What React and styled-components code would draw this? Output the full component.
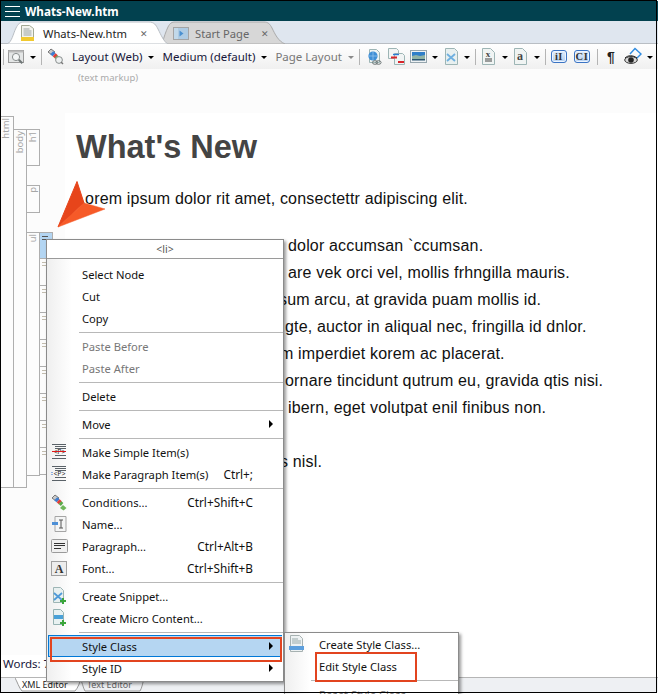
import React from 'react';
import styled, { createGlobalStyle } from 'styled-components';

const Global = createGlobalStyle`
  html, body { margin: 0; padding: 0; background: #fff; }
  * { box-sizing: border-box; }
`;

const UI = `"Noto Sans", "Open Sans", sans-serif`;

const Frame = styled.div`
  position: relative;
  width: 658px;
  height: 694px;
  overflow: hidden;
  background: #fff;
  display: flex;
  flex-direction: column;
  font-family: ${UI};
  font-size: 11.2px;
  color: #111;
`;
const FrameEdge = styled.div`
  position: absolute;
  left: 0;
  top: 0;
  width: 657px;
  height: 693px;
  border: 1px solid #000;
  pointer-events: none;
  z-index: 20;
`;
const TitleBar = styled.header`
  height: 20px;
  margin-top: 1px;
  background: #02414f;
  display: flex;
  align-items: center;
  padding-left: 5px;
  gap: 5px;
  flex: none;
`;
const Hamburger = styled.div`
  width: 15px;
  height: 11px;
  border-top: 1px solid #fff;
  border-bottom: 1px solid #fff;
  position: relative;
  &::after { content: ''; position: absolute; left: 0; right: 0; top: 4px; height: 1px; background: #fff; }
`;
const Title = styled.span`
  font-weight: 700;
  font-size: 11.7px;
  color: #fff;
`;
const TabStrip = styled.div`
  height: 23px;
  flex: none;
  background: #dfe6ef;
  border-bottom: 1px solid #b9bec4;
  display: flex;
  padding-left: 7px;
`;
const Tab = styled.div`
  position: relative;
  width: ${p => p.$w}px;
  margin-left: ${p => p.$ml || 0}px;
  height: 23px;
  z-index: ${p => (p.$active ? 2 : 1)};
  flex: none;
  display: flex;
  align-items: center;
  padding-top: 1px;
  font-size: 11.2px;
  color: ${p => (p.$active ? '#222' : '#666')};
`;
const TabShape = styled.svg`
  position: absolute;
  left: 0;
  top: 0;
  z-index: -1;
`;
const TabIcon = styled.svg`
  margin-left: ${p => p.$ml}px;
  flex: none;
`;
const TabLabel = styled.span`
  margin-left: ${p => p.$ml}px;
  white-space: nowrap;
`;
const TabClose = styled.span`
  margin-left: ${p => p.$ml}px;
  font-size: 9px;
  color: #666;
`;
const Toolbar = styled.div`
  height: 25px;
  flex: none;
  background: linear-gradient(#ffffff, #f0f0f0);
  display: flex;
  align-items: center;
  padding-left: 3px;
`;
const Sep = styled.i`
  width: 1px;
  height: 16px;
  background: #b4b4b4;
  flex: none;
  margin: 0 ${p => p.$r ?? 0}px 0 ${p => p.$l ?? 5}px;
`;
const Caret = styled.i`
  width: 0;
  height: 0;
  flex: none;
  border-left: 3px solid transparent;
  border-right: 3px solid transparent;
  border-top: 3px solid ${p => (p.$off ? '#8a8a8a' : '#000')};
  margin: 1px ${p => p.$r ?? 0}px 0 ${p => p.$l ?? 5}px;
`;
const ToolText = styled.span`
  font-size: 11.5px;
  white-space: nowrap;
  color: ${p => (p.$off ? '#777' : '#16163a')};
  margin-left: ${p => p.$ml || 0}px;
`;
const ToolIcon = styled.svg`
  flex: none;
  margin-left: ${p => p.$ml || 0}px;
  display: block;
`;
const BlueBadge = styled.span`
  width: 16px;
  height: 13px;
  flex: none;
  border: 1px solid #3b74c4;
  border-radius: 3px;
  background: linear-gradient(#e4eefa, #b4d0f1);
  box-shadow: inset 0 0 0 1px #eef5ff;
  margin-left: ${p => p.$ml || 0}px;
  font-family: "Liberation Serif", serif;
  font-size: 10.5px;
  font-weight: 700;
  line-height: 11px;
  text-align: center;
  color: #333;
  letter-spacing: 0.5px;
`;
const Pilcrow = styled.span`
  font-family: "Liberation Sans", sans-serif;
  font-size: 14px;
  font-weight: 700;
  color: #222;
  width: 8px;
  flex: none;
  margin-left: ${p => p.$ml}px;
`;
const Editor = styled.main`
  flex: 1;
  min-height: 0;
  display: flex;
  flex-direction: column;
`;
const MarkupRow = styled.div`
  height: 44px;
  flex: none;
  background: #fcfcfc;
  padding: 2px 0 0 78px;
  font-size: 9.5px;
  color: #aaa;
`;
const EditorBody = styled.div`
  flex: 1;
  min-height: 0;
  display: flex;
`;
const Gutter = styled.aside`
  width: 65px;
  flex: none;
  background: #fcfcfc;
  padding: 3px 0 0 0;
  align-self: stretch;
`;
const VLabel = styled.span`
  position: absolute;
  left: 0;
  width: 12px;
  top: ${p => p.$t || 1}px;
  writing-mode: vertical-rl;
  transform: rotate(180deg);
  line-height: 12px;
  white-space: nowrap;
  display: flex;
  align-items: center;
  font-size: 9.5px;
  color: #a6a6a6;
`;
const HtmlCol = styled.div`
  position: relative;
  width: 14px;
  height: 372px;
  border: 1px solid #aeaeae;
  border-left: none;
  padding-top: 12px;
`;
const BodyCol = styled.div`
  position: absolute;
  left: 13px;
  top: 12px;
  width: 14px;
  height: 359px;
  border: 1px solid #aeaeae;
`;
const Stack = styled.div`
  position: absolute;
  left: 26px;
  top: 12px;
  width: 40px;
`;
const Block = styled.div`
  position: relative;
  width: 14px;
  height: ${p => p.$h}px;
  margin-top: ${p => p.$mt || 0}px;
  border: 1px solid #aeaeae;
  background: #fcfcfc;
`;
const UlBlock = styled.div`
  position: relative;
  margin-top: 19px;
  display: flex;
  height: 244px;
`;
const UlCol = styled(Block)`
  margin: 0;
  height: 244px;
  flex: none;
`;
const LiCol = styled.div`
  margin-left: -1px;
  width: 14px;
  flex: none;
`;
const LiCell = styled.div`
  height: 27px;
  border: 1px solid #aeaeae;
  border-top: ${p => (p.$first ? '1px solid #aeaeae' : 'none')};
  background: ${p => (p.$sel ? '#b3d5f2' : '#fcfcfc')};
  padding: 3px 0 0 2px;
`;
const Dash = styled.b`
  display: block;
  width: 6px;
  height: 4px;
  border-top: 1px solid ${p => (p.$dark ? '#555' : '#c2bcae')};
  border-bottom: 1px solid ${p => (p.$dark ? '#555' : '#c2bcae')};
`;
const Content = styled.article`
  flex: 1;
  background: #fff;
  padding: 16px 0 0 11px;
  position: relative;
`;
const H1 = styled.h1`
  margin: 0;
  font-family: "Liberation Sans", Arial, sans-serif;
  font-weight: 700;
  font-size: 32.5px;
  line-height: 37px;
  color: #444;
`;
const Para = styled.p`
  margin: 19px 0 0;
  font-family: "Liberation Sans", Arial, sans-serif;
  font-size: 16px;
  letter-spacing: 0.17px;
  line-height: 27px;
  color: #111;
`;
const List = styled.ul`
  margin: 20px 0 0;
  padding: 0 0 0 41px;
  list-style: none;
  font-family: "Liberation Sans", Arial, sans-serif;
  font-size: 16px;
  letter-spacing: 0.17px;
  line-height: 27px;
  color: #111;
`;
const Line = styled.li`
  white-space: nowrap;
  height: 27px;
  &:last-child { margin-top: 27px; }
`;
const Hidden = styled.span`
  display: inline-block;
  width: ${p => p.$w}px;
  overflow: hidden;
  vertical-align: top;
`;
const Status = styled.div`
  height: 22px;
  flex: none;
  padding-left: 3px;
  font-size: 11.5px;
  line-height: 17px;
  background: #fff;
  color: #16163a;
`;
const BottomTabs = styled.nav`
  height: 15px;
  flex: none;
  background: #eef0f3;
  border-top: 1px solid #b5b5b5;
  display: flex;
  padding-left: 15px;
  margin-bottom: 2px;
`;
const BTab = styled.div`
  position: relative;
  width: ${p => p.$w}px;
  margin-left: ${p => p.$ml || 0}px;
  height: 14px;
  flex: none;
  font-size: 9px;
  line-height: 14px;
  padding-left: ${p => p.$pl}px;
  color: ${p => (p.$active ? '#222' : '#666')};
  z-index: ${p => (p.$active ? 2 : 1)};
`;
const Menu = styled.div`
  position: absolute;
  left: ${p => p.$l}px;
  top: ${p => p.$t}px;
  width: ${p => p.$w}px;
  height: ${p => p.$h}px;
  background: linear-gradient(90deg, #efefef 0, #ffffff ${p => p.$col}px, #fff 100%);
  border: 1px solid #8b8b8b;
  box-shadow: 2px 2px 3px rgba(0,0,0,.4);
  z-index: ${p => p.$z};
  display: flex;
  flex-direction: column;
`;
const MenuHead = styled.div`
  height: 19px;
  margin-bottom: 4px;
  background: #fff;
  border-bottom: 1px solid #9a9a9a;
  text-align: center;
  font-size: 10.5px;
  color: #555;
  line-height: 18px;
  flex: none;
`;
const Item = styled.div`
  height: 22px;
  flex: none;
  display: grid;
  grid-template-columns: ${p => p.$col - (p.$hot ? 1 : 0)}px 1fr auto ${p => p.$right - (p.$hot ? 1 : 0)}px;
  align-items: center;
  white-space: nowrap;
  font-size: 11.2px;
  color: ${p => (p.$off ? '#777' : '#111')};
  background: ${p => (p.$hot ? '#b5d6f2' : 'transparent')};
  margin: ${p => (p.$hot ? '0 1px 0 1px' : '0')};
  box-shadow: ${p => (p.$hot ? 'inset 1px 0 0 #0078d7, inset 0 -1px 0 #0078d7, inset 0 1px 0 #0078d7' : 'none')};
`;
const ItemIcon = styled.span`
  display: flex;
  width: 24px;
  justify-content: center;
  align-items: center;
`;
const Shortcut = styled.span`
  font-size: 11.8px;
`;
const Arrow = styled.i`
  width: 0;
  height: 0;
  justify-self: center;
  margin-left: 6px;
  border-top: 4px solid transparent;
  border-bottom: 4px solid transparent;
  border-left: 4px solid #000;
`;
const MenuSep = styled.div`
  height: 6px;
  flex: none;
  margin-left: ${p => p.$ml}px;
  padding-top: 3px;
  &::after { content: ''; display: block; height: 1px; background: #b8b8b8; }
`;
const Callout = styled.div`
  position: absolute;
  left: ${p => p.$l}px;
  top: ${p => p.$t}px;
  width: ${p => p.$w}px;
  height: ${p => p.$h}px;
  border: 2px solid #e2441f;
  z-index: 12;
`;
const Pointer = styled.svg`
  position: absolute;
  left: 56px;
  top: 179px;
  z-index: 6;
`;

const Doc = ({ fill = '#eef3f3', stroke = '#9db5b5' }) => (
  <path d="M2.5 1.5h7l3 3v10h-10z" fill={fill} stroke={stroke} />
);

const IconMagnifier = () => (
  <ToolIcon width="17" height="16" viewBox="0 0 17 16" $ml={3}>
    <rect x=".5" y="1.5" width="15" height="12" fill="#e4e6e6" stroke="#9a9a9a" />
    <rect x=".5" y="1.5" width="15" height="2" fill="#bbb" />
    <circle cx="8" cy="8" r="3.6" fill="#f5f7f7" stroke="#8a8f8f" />
    <path d="M10.8 10.8l3.5 3.5" stroke="#6f7676" strokeWidth="2" />
  </ToolIcon>
);
const IconTags = ({ ml = 0 }) => (
  <ToolIcon width="17" height="17" viewBox="0 0 17 17" $ml={ml}>
    <path d="M1 4l3-3 4 3-3 3z" fill="#c9c9c9" stroke="#777" />
    <path d="M3.2 6.2l3-3 2.4 2-3 3z" fill="#3f7fd0" />
    <path d="M5.6 8.2l3-3 2.2 2-3 3z" fill="#e0403a" />
    <path d="M7.6 10l2.8-2.8 2 1.8-2.6 3z" fill="#5ba84a" />
    <circle cx="12" cy="12" r="3.4" fill="#edf0f0" stroke="#8a8f8f" />
    <path d="M14 14l2 2" stroke="#777" strokeWidth="1.5" />
  </ToolIcon>
);
const IconGlobeDoc = ({ ml }) => (
  <ToolIcon width="15" height="18" viewBox="0 0 15 18" $ml={ml}>
    <Doc />
    <circle cx="6" cy="8" r="4.6" fill="#3f8fd6" />
    <path d="M1.5 8h9M6 3.4v9" stroke="#9cc9ef" strokeWidth=".7" />
    <ellipse cx="8" cy="14.5" rx="2.6" ry="1.8" fill="none" stroke="#6d7676" />
    <ellipse cx="11.5" cy="14.5" rx="2.6" ry="1.8" fill="none" stroke="#6d7676" />
  </ToolIcon>
);
const IconCompare = ({ ml }) => (
  <ToolIcon width="17" height="17" viewBox="0 0 17 17" $ml={ml}>
    <path d="M.5.5h8l2 2v8H.5z" fill="#f1f4f4" stroke="#9db5b5" />
    <path d="M6.5 5.5h8l2 2v9h-10z" fill="#f1f4f4" stroke="#9db5b5" />
    <path d="M3 9.5h6" stroke="#d8252a" strokeWidth="2" />
    <path d="M5 6.5h6" stroke="#2b7bd4" strokeWidth="1.4" />
    <path d="M10 14h6" stroke="#d8252a" strokeWidth="2" />
  </ToolIcon>
);
const IconPicture = ({ ml }) => (
  <ToolIcon width="17" height="13" viewBox="0 0 17 13" $ml={ml}>
    <rect x=".5" y=".5" width="16" height="12" fill="#eef2f4" stroke="#95a5ad" />
    <rect x="2" y="2" width="13" height="4" fill="#2f7fc9" />
    <path d="M2 6l4-1 4 1 5-1v5H2z" fill="#8fb3a6" />
    <path d="M2 9h13v1.500H2z" fill="#2a5470" />
  </ToolIcon>
);
const IconSnippet = ({ ml }) => (
  <ToolIcon width="15" height="18" viewBox="0 0 15 18" $ml={ml}>
    <path d="M1.500.5h9l3 3v13h-12z" fill="#e8f0f0" stroke="#9db5b5" />
    <path d="M3 6l8 7M11 6l-8 7" stroke="#6fb0e0" strokeWidth="1.8" />
  </ToolIcon>
);
const IconVarDoc = ({ ml, letter }) => (
  <ToolIcon width="13" height="17" viewBox="0 0 13 17" $ml={ml}>
    <path d="M.5.5h8l4 4v12H.5z" fill="#f0f4f3" stroke="#9db5b5" />
    <text x="6" y={letter === 'x' ? 9 : 12} textAnchor="middle" fontFamily="Liberation Serif" fontWeight="700" fontSize={letter === 'x' ? 9 : 12} fill="#444">{letter}</text>
    {letter === 'x' && <path d="M3 11h7M3 13h7" stroke="#444" />}
  </ToolIcon>
);
const IconEye = ({ ml }) => (
  <ToolIcon width="19" height="20" viewBox="0 0 19 20" $ml={ml}>
    <path d="M6 7l5-5.500 6 5.500-6 6" fill="none" stroke="#2f8be0" strokeWidth="1.4" />
    <ellipse cx="7" cy="13" rx="6.300" ry="3.400" fill="#d8d8d8" stroke="#333" />
    <circle cx="7" cy="13" r="2.800" fill="#222" />
    <path d="M1 11c3-3 8-3 12 0" stroke="#222" fill="none" />
  </ToolIcon>
);
const IconPlayTab = () => (
  <TabIcon width="16" height="13" viewBox="0 0 16 13" $ml={12}>
    <rect x=".5" y=".5" width="15" height="12" fill="#aecbe3" stroke="#a4a4a4" />
    <rect x="1" y="1" width="4" height="11" fill="#c2d9ea" />
    <path d="M6.500 3.500l4 3-4 3z" fill="#4a90d0" />
  </TabIcon>
);
const IconDocTab = () => (
  <TabIcon width="13" height="16" viewBox="0 0 13 16" $ml={14}>
    <path d="M.5.500h8l4 3v9H.5z" fill="#f3f4ee" stroke="#a3a994" />
    <path d="M2.500 4h6M2.500 6h8M2.500 8h8M2.500 10h8" stroke="#9aa3a3" />
    <rect y="12" width="13" height="4" fill="#f1c92f" />
  </TabIcon>
);

const MenuLinesIcon = ({ red }) => (
  <svg width="16" height="16" viewBox="0 0 16 16">
    <path d="M1 .5h14M4 2.500h11M4 4.500h11M4 11.500h11M1 14.500h14" stroke="#5a6268" strokeWidth="1" strokeDasharray={red ? undefined : undefined} />
    <text x="8.500" y="10" textAnchor="middle" fontFamily="Liberation Mono" fontSize="6.500" fill="#222">{'<P>'}</text>
    {red ? <path d="M1 7.500h14" stroke="#e01818" strokeWidth="1" /> : <path d="M1 6v3" stroke="#2a6bd0" strokeDasharray="1 1" />}
  </svg>
);
const NameIcon = () => (
  <svg width="16" height="16" viewBox="0 0 16 16">
    <path d="M4 .5h11v15H4z" fill="#f4f5f5" stroke="#a5a5a5" />
    <rect x="1" y="6" width="6" height="3" fill="#4d8fd6" />
    <path d="M8 4h4M10 4v8M8 12h4" stroke="#555" fill="none" />
  </svg>
);
const ParaIcon = () => (
  <svg width="17" height="14" viewBox="0 0 17 14">
    <rect x=".5" y=".5" width="16" height="13" rx="1" fill="#f0f0f0" stroke="#9a9a9a" />
    <path d="M3 4.500h11M3 6.500h11M3 9.500h7" stroke="#333" />
  </svg>
);
const FontIcon = () => (
  <svg width="16" height="15" viewBox="0 0 16 15">
    <rect x=".5" y=".5" width="15" height="14" fill="#ededed" stroke="#a0a0a0" />
    <text x="8" y="12" textAnchor="middle" fontFamily="Liberation Serif" fontWeight="700" fontSize="12" fill="#333">A</text>
  </svg>
);
const MicroIcon = () => (
  <svg width="15" height="18" viewBox="0 0 15 18">
    <path d="M1.500.5h7l3 3v12h-10z" fill="#e8f1f1" stroke="#95b2b2" />
    <rect x="2" y="6" width="9" height="4" fill="#49a1d8" />
    <path d="M11 11v6M8 14h6" stroke="#3aa53a" strokeWidth="2" />
  </svg>
);
const StyleIcon = () => (
  <svg width="16" height="18" viewBox="0 0 16 18">
    <path d="M1.500.5h9l3 3v13h-12z" fill="#eef2f3" stroke="#a6b1b1" />
    <path d="M3 4h6M3 6h9M3 8h9" stroke="#9aa" />
    <rect x="0" y="11" width="15" height="4" fill="#5d9fdd" />
  </svg>
);
const MenuTagIcon = () => (
  <svg width="17" height="17" viewBox="0 0 17 17">
    <path d="M1 4l3-3 4 3-3 3z" fill="#c9c9c9" stroke="#777" />
    <path d="M3.200 6.200l3-3 2.400 2-3 3z" fill="#3f7fd0" />
    <path d="M5.600 8.200l3-3 2.200 2-3 3z" fill="#e0403a" />
    <path d="M7.600 10l2.800-2.800 2 1.800-2.600 3z" fill="#5ba84a" />
    <path d="M9 14l3-3 3.500 3-3 2.500z" fill="#6fb75a" />
  </svg>
);
const MenuSnippetIcon = () => (
  <svg width="15" height="18" viewBox="0 0 15 18">
    <path d="M1.500.5h7l3 3v12h-10z" fill="#e8f0f0" stroke="#9db5b5" />
    <path d="M2 6l8 7M10 6l-8 7" stroke="#4f9ad8" strokeWidth="1.800" />
    <path d="M11 11v6M8 14h6" stroke="#3aa53a" strokeWidth="2" />
  </svg>
);

const menu = [
  { t: 'Select Node' }, { t: 'Cut' }, { t: 'Copy' }, 'sep',
  { t: 'Paste Before', off: true }, { t: 'Paste After', off: true }, 'sep',
  { t: 'Delete' }, 'sep',
  { t: 'Move', sub: true }, 'sep',
  { t: 'Make Simple Item(s)', icon: <MenuLinesIcon red /> },
  { t: 'Make Paragraph Item(s)', k: 'Ctrl+;', icon: <MenuLinesIcon /> }, 'sep',
  { t: 'Conditions...', k: 'Ctrl+Shift+C', icon: <MenuTagIcon /> },
  { t: 'Name...', icon: <NameIcon /> },
  { t: 'Paragraph...', k: 'Ctrl+Alt+B', icon: <ParaIcon /> },
  { t: 'Font...', k: 'Ctrl+Shift+B', icon: <FontIcon /> }, 'sep',
  { t: 'Create Snippet...', icon: <MenuSnippetIcon /> },
  { t: 'Create Micro Content...', icon: <MicroIcon /> }, 'sep',
  { t: 'Style Class', sub: true, hot: true },
  { t: 'Style ID', sub: true },
];
const submenu = [
  { t: 'Create Style Class...', icon: <StyleIcon /> },
  { t: 'Edit Style Class' }, 'sep',
  { t: 'Reset Style Class', off: true },
];
const lines = [
  ['Fermentum elit sed ip', 171, 'dolor accumsan `ccumsan.'],
  ['Mauris sit amet orn', 171, 'are vek orci vel, mollis frhngilla mauris.'],
  ['Integer non lorem ip', 162, 'sum arcu, at gravida puam mollis id.'],
  ['Suspendisse tempor li', 168, 'gte, auctor in aliqual nec, fringilla id dnlor.'],
  ['Vestibulum tincidunt', 163, 'm imperdiet korem ac placerat.'],
  ['Vivamus vitae lectus ', 168, 'ornare tincidunt qutrum eu, gravida qtis nisi.'],
  ['Donec aliquet eros l', 171, 'ibern, eget volutpat enil finibus non.'],
  ['Morbi dignissim at risu', 163, 's nisl.'],
];

export default function App() {
  return (
    <Frame>
      <Global />
      <TitleBar>
        <Hamburger />
        <Title>Whats-New.htm</Title>
      </TitleBar>
      <TabStrip>
        <Tab $w={160} $active>
          <TabShape width="162" height="23" viewBox="0 0 162 23">
            <path d="M0 23C5 21 6 13 9 7 11 3 13 1 17 1H142C147 1 149 4 151 8 154 14 157 21 161 23Z" fill="#fff" stroke="#b9bec4" />
          </TabShape>
          <IconDocTab />
          <TabLabel $ml={9}>Whats-New.htm</TabLabel>
          <TabClose $ml={13}>✕</TabClose>
        </Tab>
        <Tab $w={135} $ml={-6}>
          <TabShape width="135" height="23" viewBox="0 0 135 23">
            <path d="M1 23C3 16 5 10 7 6 9 2 11 1 14 1H103C107 1 109 3 111 7 114 13 117 20 124 23Z" fill="#d7d7d7" stroke="#aaa" />
          </TabShape>
          <IconPlayTab />
          <TabLabel $ml={6}>Start Page</TabLabel>
          <TabClose $ml={12}>✕</TabClose>
        </Tab>
      </TabStrip>
      <Toolbar>
        <Sep $l={0} $r={1} />
        <IconMagnifier />
        <Caret $l={5} $r={5} />
        <Sep $l={0} $r={5} />
        <IconTags />
        <ToolText $ml={8}>Layout (Web)</ToolText>
        <Caret $l={6} $r={8} />
        <ToolText>Medium (default)</ToolText>
        <Caret $l={6} $r={8} />
        <ToolText $off>Page Layout</ToolText>
        <Caret $off $l={6} />
        <Sep />
        <IconGlobeDoc ml={7} />
        <IconCompare ml={6} />
        <IconPicture ml={5} />
        <Caret $l={5} $r={5} />
        <IconSnippet ml={1} />
        <Caret $l={5} />
        <Sep />
        <IconVarDoc ml={6} letter="x" />
        <Caret $l={7} />
        <IconVarDoc ml={6} letter="a" />
        <Caret $l={7} />
        <Sep $r={5} />
        <BlueBadge>iI</BlueBadge>
        <BlueBadge $ml={7}>CI</BlueBadge>
        <Sep $l={7} />
        <Pilcrow $ml={9}>¶</Pilcrow>
        <IconEye ml={9} />
        <Caret $l={4} />
      </Toolbar>
      <Editor>
        <MarkupRow>(text markup)</MarkupRow>
        <EditorBody>
          <Gutter>
            <HtmlCol>
              <VLabel>html</VLabel>
              <BodyCol>
                <VLabel>body</VLabel>
              </BodyCol>
              <Stack>
                <Block $h={37}><VLabel>h1</VLabel></Block>
                <Block $h={28} $mt={19}><VLabel>p</VLabel></Block>
                <UlBlock>
                  <UlCol><VLabel>ul</VLabel></UlCol>
                  <LiCol>
                    {Array.from({ length: 9 }, (_, i) => (
                      <LiCell key={i} $first={i === 0} $sel={i === 0}><Dash $dark={i === 0} /></LiCell>
                    ))}
                  </LiCol>
                </UlBlock>
              </Stack>
            </HtmlCol>
          </Gutter>
          <Content>
            <H1>What's New</H1>
            <Para>Lorem ipsum dolor rit amet, consectettr adipiscing elit.</Para>
            <List>
              {lines.map(([a, w, b]) => (
                <Line key={b}><Hidden $w={w}>{a}</Hidden>{b}</Line>
              ))}
            </List>
          </Content>
        </EditorBody>
        <Status>Words: 7</Status>
        <BottomTabs>
          <BTab $w={66} $pl={7} $active>
            <TabShape width="68" height="14" viewBox="0 0 68 14">
              <path d="M0 0C2 3 4 10 7 13H60C63 10 65 4 66 0" fill="#fff" stroke="#9a9a9a" />
            </TabShape>
            XML Editor
          </BTab>
          <BTab $w={64} $pl={7} $ml={-1}>
            <TabShape width="66" height="14" viewBox="0 0 66 14">
              <path d="M0 0C2 3 3 10 5 13H60C62 10 63 4 64 0" fill="none" stroke="#9a9a9a" />
            </TabShape>
            Text Editor
          </BTab>
        </BottomTabs>
      </Editor>

      <Pointer width="52" height="50" viewBox="0 0 52 50">
        <path d="M21 2.500L28 24 2 48z" fill="#e7451b" stroke="#e7451b" strokeLinejoin="round" />
        <path d="M28 24L49 30 2 48z" fill="#f65a28" stroke="#f65a28" strokeWidth=".5" strokeLinejoin="round" />
      </Pointer>

      <Menu $l={46} $t={239} $w={238} $h={443} $col={25} $z={8}>
        <MenuHead>&lt;li&gt;</MenuHead>
        {menu.map((m, i) =>
          m === 'sep' ? <MenuSep key={i} $ml={32} /> : (
            <Item key={i} $col={35} $right={30} $off={m.off} $hot={m.hot}>
              <ItemIcon>{m.icon}</ItemIcon>
              <span>{m.t}</span>
              <Shortcut>{m.k}</Shortcut>
              {m.sub ? <Arrow /> : <span />}
            </Item>
          )
        )}
      </Menu>
      <Menu $l={284} $t={632} $w={175} $h={90} $col={25} $z={9}>
        {submenu.map((m, i) =>
          m === 'sep' ? <MenuSep key={i} $ml={26} /> : (
            <Item key={i} $col={34} $right={4} $off={m.off}>
              <ItemIcon>{m.icon}</ItemIcon>
              <span>{m.t}</span>
              <span />
              <span />
            </Item>
          )
        )}
      </Menu>
      <Callout $l={50} $t={637} $w={232} $h={25} />
      <Callout $l={315} $t={652} $w={102} $h={30} />
      <FrameEdge />
    </Frame>
  );
}
